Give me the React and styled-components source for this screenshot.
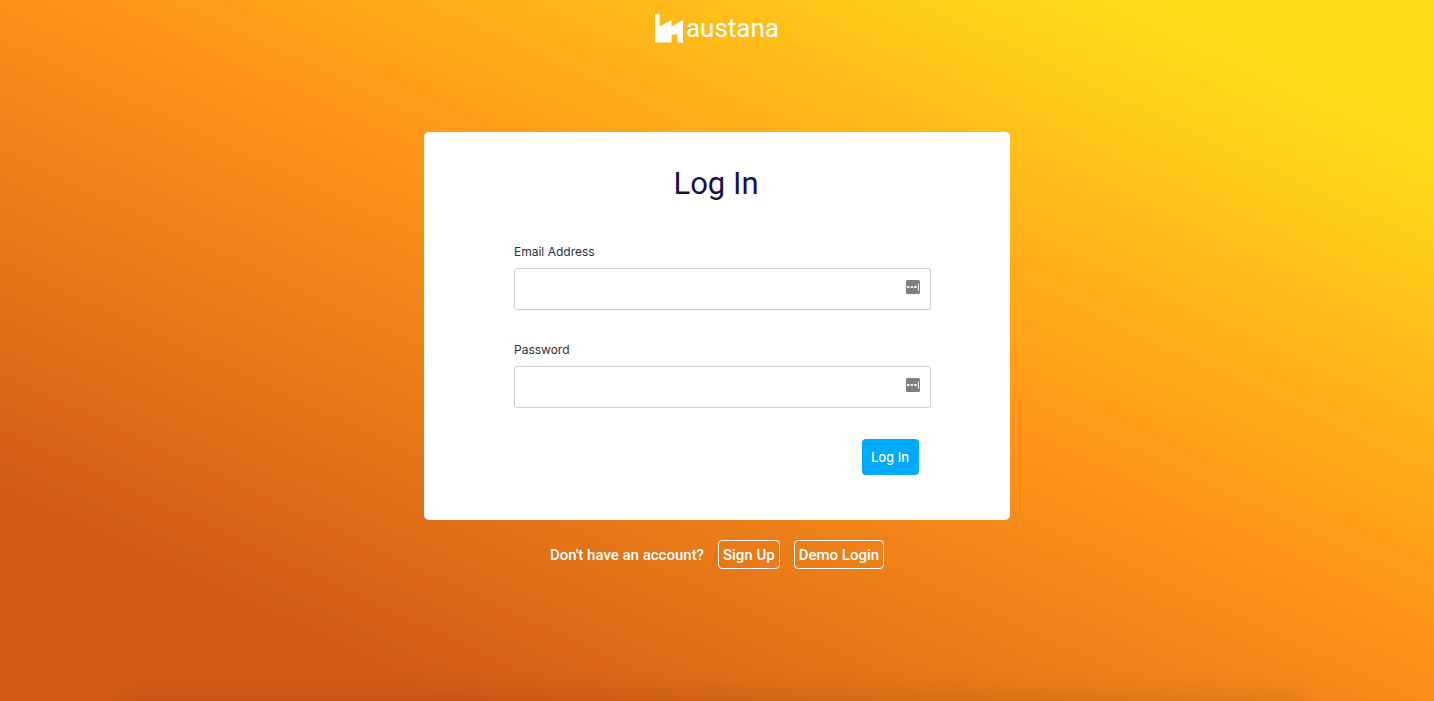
import React from "react";
import styled, { createGlobalStyle } from "styled-components";

const GlobalStyle = createGlobalStyle`
  *, *::before, *::after { box-sizing: border-box; }
  body {
    margin: 0;
    font-family: Inter, "Liberation Sans", sans-serif;
  }
`;

const Page = styled.div`
  display: flex;
  flex-direction: column;
  align-items: center;
  min-height: 100vh;
  overflow: hidden;
  background: linear-gradient(25deg, #d15b16 15%, #ff9619 55%, #ffdd19 90%);
`;

const Header = styled.header`
  display: flex;
  justify-content: center;
  padding: 12px 16px;
`;

const Brand = styled.a`
  display: flex;
  align-items: center;
  gap: 3px;
  height: 32px;
  color: #fff;
  font-family: Roboto, sans-serif;
  font-size: 26px;
  line-height: 32px;
  text-decoration: none;
`;

const Main = styled.main`
  display: flex;
  flex-direction: column;
  align-items: center;
  flex: 1;
  width: 100%;
  padding: 76px 16px 0;
`;

const Card = styled.section`
  width: 100%;
  max-width: 586px;
  padding: 32px 79px 45px 90px;
  border-radius: 5px;
  background: #fff;
`;

const Title = styled.h1`
  margin: 0 13px 39px 0;
  color: #1b0e4f;
  font-family: Roboto, sans-serif;
  font-size: 31px;
  font-weight: 400;
  line-height: 40px;
  text-align: center;
`;

const Form = styled.form`
  display: flex;
  flex-direction: column;
`;

const Field = styled.div`
  display: flex;
  flex-direction: column;
  gap: 8px;
  margin-bottom: 31px;
`;

const Label = styled.label`
  color: #273240;
  font-size: 12px;
  line-height: 17px;
`;

const InputWrap = styled.div`
  position: relative;
`;

const Input = styled.input`
  display: block;
  width: 100%;
  height: 42px;
  padding: 0 36px 0 10px;
  border: 1px solid #cfcfcf;
  border-radius: 3px;
  background: #fff;
  color: #273240;
  font: inherit;
  font-size: 14px;
`;

const FillIcon = styled.svg`
  position: absolute;
  top: 12px;
  right: 11px;
`;

const Submit = styled.button`
  align-self: flex-end;
  height: 36px;
  margin-right: 12px;
  padding: 0 10px 0 9px;
  border: 0;
  border-radius: 4px;
  background: #00aaff;
  color: #fff;
  font: inherit;
  font-size: 13px;
  font-weight: 500;
`;

const Alternatives = styled.div`
  display: flex;
  flex-wrap: wrap;
  align-items: center;
  justify-content: center;
  gap: 14px;
  padding-top: 20px;
  color: #fff;
  font-family: Roboto, sans-serif;
  font-size: 15px;
  font-weight: 500;
`;

const OutlineButton = styled.button`
  height: 29px;
  padding: 0 4px;
  border: 1px solid #fff;
  border-radius: 4px;
  background: transparent;
  color: #fff;
  font: inherit;
`;

const BottomShade = styled.div`
  width: 82%;
  height: 24px;
  margin-bottom: -24px;
  box-shadow: 0 0 30px rgba(0, 0, 0, 0.12);
`;

function CredentialField({ id, label, type }) {
  return (
    <Field>
      <Label htmlFor={id}>{label}</Label>
      <InputWrap>
        <Input id={id} name={id} type={type} />
        <FillIcon width="14" height="14" viewBox="0 0 14 14" aria-hidden="true">
          <rect width="14" height="14" rx="1.5" fill="#7f7f7f" />
          <g fill="#fff">
            <rect x="1" y="6" width="2.4" height="2" rx="0.6" />
            <rect x="4.8" y="6" width="2.2" height="2" rx="0.6" />
            <rect x="8.2" y="6" width="2.4" height="2" rx="0.6" />
            <rect x="11.9" y="3.5" width="1" height="7" />
          </g>
        </FillIcon>
      </InputWrap>
    </Field>
  );
}

export default function App() {
  return (
    <>
      <GlobalStyle />
      <Page>
        <Header>
          <Brand href="#">
            <svg width="28" height="29" viewBox="0 0 28 29" aria-hidden="true">
              <path
                fill="#fff"
                d="M0 1Q0 0 1 0H3.5Q4.5 0 4.5 1V12.5L16.5 6V12.5L28 6V28.5H22.5V20.5H16.5V28.5H0Z"
              />
            </svg>
            austana
          </Brand>
        </Header>
        <Main>
          <Card>
            <Title>Log In</Title>
            <Form onSubmit={(event) => event.preventDefault()}>
              <CredentialField id="email" label="Email Address" type="email" />
              <CredentialField id="password" label="Password" type="password" />
              <Submit type="submit">Log In</Submit>
            </Form>
          </Card>
          <Alternatives>
            <span>Don't have an account?</span>
            <OutlineButton type="button">Sign Up</OutlineButton>
            <OutlineButton type="button">Demo Login</OutlineButton>
          </Alternatives>
        </Main>
        <BottomShade />
      </Page>
    </>
  );
}
